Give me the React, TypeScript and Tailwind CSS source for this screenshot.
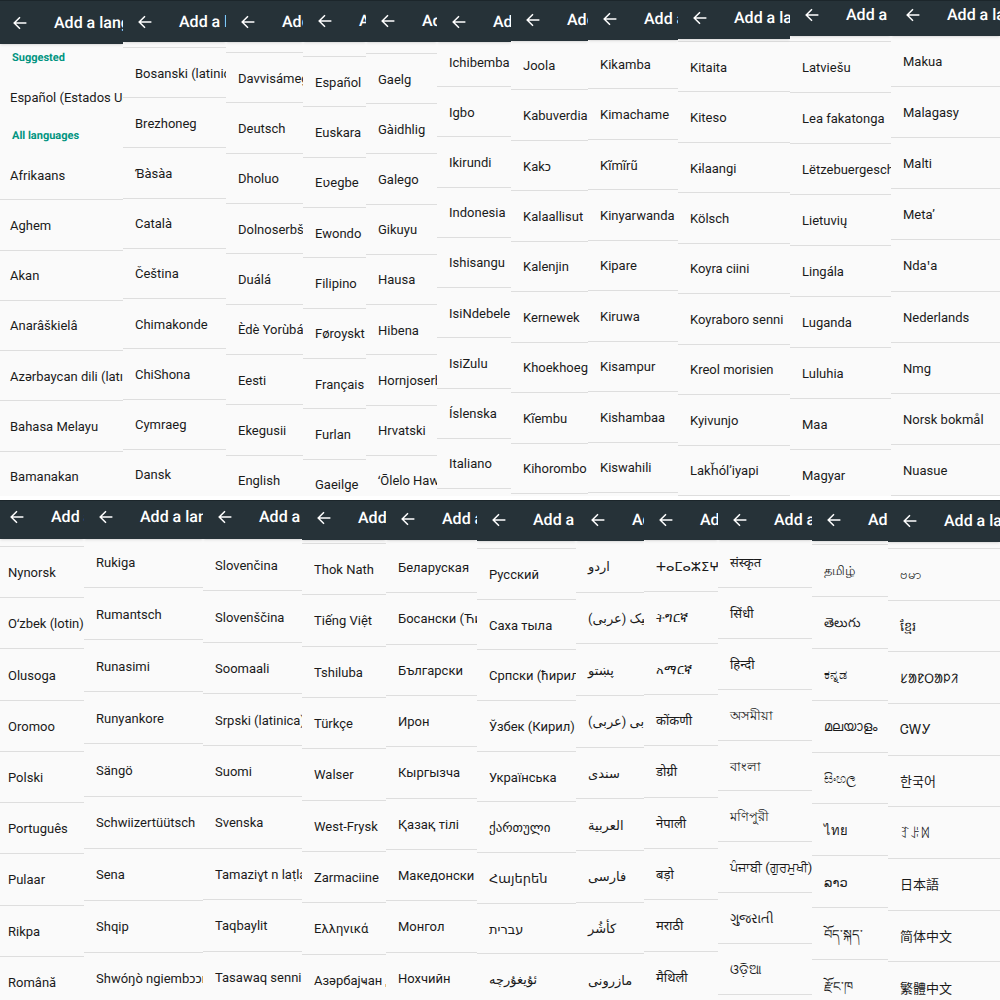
import React from 'react';
import clsx from 'clsx';

interface Strip {
  bar: string; // app bar height and padding
  list: string; // how far the list is scrolled
  inset?: string;
  barInset?: string;
  items: string[];
}

const TOP: Strip[] = [
  {
    bar: 'h-11',
    list: '-mb-1.5',
    inset: 'pl-2.5',
    barInset: 'pl-[13px]',
    items: ['Afrikaans', 'Aghem', 'Akan', 'Anarâškielâ', 'Azərbaycan dili (latın)', 'Bahasa Melayu', 'Bamanakan'],
  },
  {
    bar: 'h-[42px]',
    list: 'mt-[5px] -mb-1 border-t',
    items: ['Bosanski (latinica)', 'Brezhoneg', 'Ɓàsàa', 'Català', 'Čeština', 'Chimakonde', 'ChiShona', 'Cymraeg', 'Dansk'],
  },
  {
    bar: 'h-[42px]',
    list: 'mt-2.5 -mb-2.5 border-t',
    items: ['Davvisámegiella', 'Deutsch', 'Dholuo', 'Dolnoserbšćina', 'Duálá', 'Èdè Yorùbá', 'Eesti', 'Ekegusii', 'English'],
  },
  {
    bar: 'h-[42px] pb-0.5',
    list: 'mt-3.5 -mb-3.5 border-t',
    items: ['Español', 'Euskara', 'Eʋegbe', 'Ewondo', 'Filipino', 'Føroyskt', 'Français', 'Furlan', 'Gaeilge'],
  },
  {
    bar: 'h-[42px] pb-0.5',
    list: 'mt-[11px] -mb-2.5 border-t',
    items: ['Gaelg', 'Gàidhlig', 'Galego', 'Gikuyu', 'Hausa', 'Hibena', 'Hornjoserbšćina', 'Hrvatski', 'ʻŌlelo Hawaiʻi'],
  },
  {
    bar: 'h-[42px]',
    list: '-mt-[5px] mb-[7px]',
    items: ['Ichibemba', 'Igbo', 'Ikirundi', 'Indonesia', 'Ishisangu', 'IsiNdebele', 'IsiZulu', 'Íslenska', 'Italiano'],
  },
  {
    bar: 'h-[41px] pb-0.5',
    list: '-mt-px mb-0.5',
    items: ['Joola', 'Kabuverdianu', 'Kakɔ', 'Kalaallisut', 'Kalenjin', 'Kernewek', 'Khoekhoegowab', 'Kĩembu', 'Kihorombo'],
  },
  {
    bar: 'h-10 pb-1',
    list: '-mt-px mb-[3px]',
    items: ['Kikamba', 'Kimachame', 'Kĩmĩrũ', 'Kinyarwanda', 'Kipare', 'Kiruwa', 'Kisampur', 'Kishambaa', 'Kiswahili'],
  },
  {
    bar: 'h-[39px] pb-1',
    list: 'mt-0.5 border-t',
    items: ['Kitaita', 'Kiteso', 'Kɨlaangi', 'Kölsch', 'Koyra ciini', 'Koyraboro senni', 'Kreol morisien', 'Kyivunjo', 'Lakȟólʼiyapi'],
  },
  {
    bar: 'h-9 pb-2',
    list: 'mt-[5px] -mb-[5px] border-t',
    items: ['Latviešu', 'Lea fakatonga', 'Lëtzebuergesch', 'Lietuvių', 'Lingála', 'Luganda', 'Luluhia', 'Maa', 'Magyar'],
  },
  {
    bar: 'h-9 pb-2',
    list: '',
    items: ['Makua', 'Malagasy', 'Malti', 'Metaʼ', 'Ndaꞌa', 'Nederlands', 'Nmg', 'Norsk bokmål', 'Nuasue'],
  },
];

const BOTTOM: Strip[] = [
  {
    bar: 'h-[39px] pb-1.5',
    list: 'mt-[7px] -mb-2 border-t',
    inset: 'pl-2',
    barInset: 'pl-2.5',
    items: ['Nynorsk', 'Oʻzbek (lotin)', 'Olusoga', 'Oromoo', 'Polski', 'Português', 'Pulaar', 'Rikpa', 'Română'],
  },
  {
    bar: 'h-[39px] pb-1.5',
    list: '-mt-[3px] -mb-[5px]',
    items: ['Rukiga', 'Rumantsch', 'Runasimi', 'Runyankore', 'Sängö', 'Schwiizertüütsch', 'Sena', 'Shqip', 'Shwóŋò ngiembɔɔn'],
  },
  {
    bar: 'h-[39px] pb-1.5',
    list: 'mt-px -mb-[3px]',
    items: ['Slovenčina', 'Slovenščina', 'Soomaali', 'Srpski (latinica)', 'Suomi', 'Svenska', 'Tamaziɣt n laṭlaṣ', 'Taqbaylit', 'Tasawaq senni'],
  },
  {
    bar: 'h-10 pb-1.5',
    list: 'mt-[3px] -mb-1.5 border-t',
    items: ['Thok Nath', 'Tiếng Việt', 'Tshiluba', 'Türkçe', 'Walser', 'West-Frysk', 'Zarmaciine', 'Ελληνικά', 'Азәрбајҹан дили'],
  },
  {
    bar: 'h-10 pb-1',
    list: 'mt-0.5 -mb-1',
    items: ['Беларуская', 'Босански (Ћирилица)', 'Български', 'Ирон', 'Кыргызча', 'Қазақ тілі', 'Македонски', 'Монгол', 'Нохчийн'],
  },
  {
    bar: 'h-[41px] pb-0.5',
    list: 'mt-[7px] -mb-[5px] border-t',
    items: ['Русский', 'Саха тыла', 'Српски (ћирилица)', 'Ўзбек (Кирил)', 'Українська', 'ქართული', 'Հայերեն', 'עברית', 'ئۇيغۇرچە'],
  },
  {
    bar: 'h-[41px] pb-0.5',
    list: '-mb-1.5',
    items: ['اردو', 'اوزبیک (عربی)', 'پښتو', 'پنجابی (عربی)', 'سندی', 'العربية', 'فارسی', 'کأشُر', 'مازرونی'],
  },
  {
    bar: 'h-10 pb-0.5',
    list: 'mt-px -mb-[3px]',
    items: ['ⵜⴰⵎⴰⵣⵉⵖⵜ', 'ትግርኛ', 'አማርኛ', 'कोंकणी', 'डोग्री', 'नेपाली', 'बड़ो', 'मराठी', 'मैथिली'],
  },
  {
    bar: 'h-10 pb-0.5',
    list: '-mt-[3px] mb-[5px]',
    items: ['संस्कृत', 'सिंधी', 'हिन्दी', 'অসমীয়া', 'বাংলা', 'মণিপুরী', 'ਪੰਜਾਬੀ (ਗੁਰਮੁਖੀ)', 'ગુજરાતી', 'ଓଡ଼ିଆ'],
  },
  {
    bar: 'h-[41px] pb-0.5',
    list: 'mt-[3px] -mb-3 border-t',
    items: ['தமிழ்', 'తెలుగు', 'ಕನ್ನಡ', 'മലയാളം', 'සිංහල', 'ไทย', 'ລາວ', 'བོད་སྐད་', 'རྫོང་ཁ'],
  },
  {
    bar: 'h-[42px] pb-0.5',
    list: 'mt-1.5 -mb-3.5 border-t',
    items: ['ဗမာ', 'ខ្មែរ', 'ᱥᱟᱱᱛᱟᱞᱤ', 'ᏣᎳᎩ', '한국어', 'ꆈꌠꉙ', '日本語', '简体中文', '繁體中文'],
  },
];

const BackArrow = () => (
  <svg viewBox="0 0 14 14" className="w-3.5 h-3.5" fill="none" stroke="currentColor" strokeWidth="1.5">
    <path d="M13.4 7H1.6M7 1.2L1.2 7L7 12.8" />
  </svg>
);

const AppBar = ({ className, inset = 'pl-[15px]' }: { className: string; inset?: string }) => (
  <header className={clsx('relative z-10 shrink-0 flex items-center gap-[27px] overflow-hidden bg-[#263238] border-t border-[#1c262b] text-white shadow-sm', inset, className)}>
    <button aria-label="Back" className="shrink-0"><BackArrow /></button>
    <h1 className="text-base leading-5 font-medium whitespace-nowrap">Add a language</h1>
  </header>
);

const Language = ({ name, inset = 'pl-3' }: { name: string; inset?: string }) => (
  <button className={clsx('w-full h-full pt-0.5 text-left whitespace-nowrap overflow-hidden', inset)}>{name}</button>
);

const Column = ({ strip, suggested }: { strip: Strip; suggested?: string }) => (
  <div className="flex flex-col overflow-hidden bg-[#fafafa]">
    <AppBar className={strip.bar} inset={strip.barInset} />
    {suggested && (
      <>
        <h2 className="pl-3 pt-1 h-7 text-[11px] leading-5 font-bold text-[#009480]">Suggested</h2>
        <div className="h-[50px]"><Language name={suggested} inset={strip.inset} /></div>
        <h2 className="pl-3 pt-1 h-7 text-[11px] leading-5 font-bold text-[#009480]">All languages</h2>
      </>
    )}
    <ul className={clsx('flex-1 flex flex-col border-[#dedede]', strip.list)}>
      {strip.items.map((name) => (
        <li key={name} className="flex-1 border-b border-[#dedede]">
          <Language name={name} inset={strip.inset} />
        </li>
      ))}
    </ul>
  </div>
);

export default function App() {
  return (
    <main className="min-h-screen grid grid-rows-2 bg-white text-[13px] leading-5 text-[#1a1a1a] [text-rendering:geometricPrecision] font-[Roboto,'Noto_Sans','DejaVu_Sans','Noto_Sans_CJK_SC',sans-serif]">
      <section className="grid pb-1 grid-cols-[123fr_103fr_77fr_63fr_71fr_74fr_77fr_90fr_112fr_101fr_109fr]">
        {TOP.map((strip, i) => (
          <Column key={i} strip={strip} suggested={i === 0 ? 'Español (Estados Unidos)' : undefined} />
        ))}
      </section>
      <section className="grid grid-cols-[84fr_119fr_99fr_84fr_91fr_99fr_68fr_74fr_94fr_76fr_112fr]">
        {BOTTOM.map((strip, i) => (
          <Column key={i} strip={strip} />
        ))}
      </section>
    </main>
  );
}
